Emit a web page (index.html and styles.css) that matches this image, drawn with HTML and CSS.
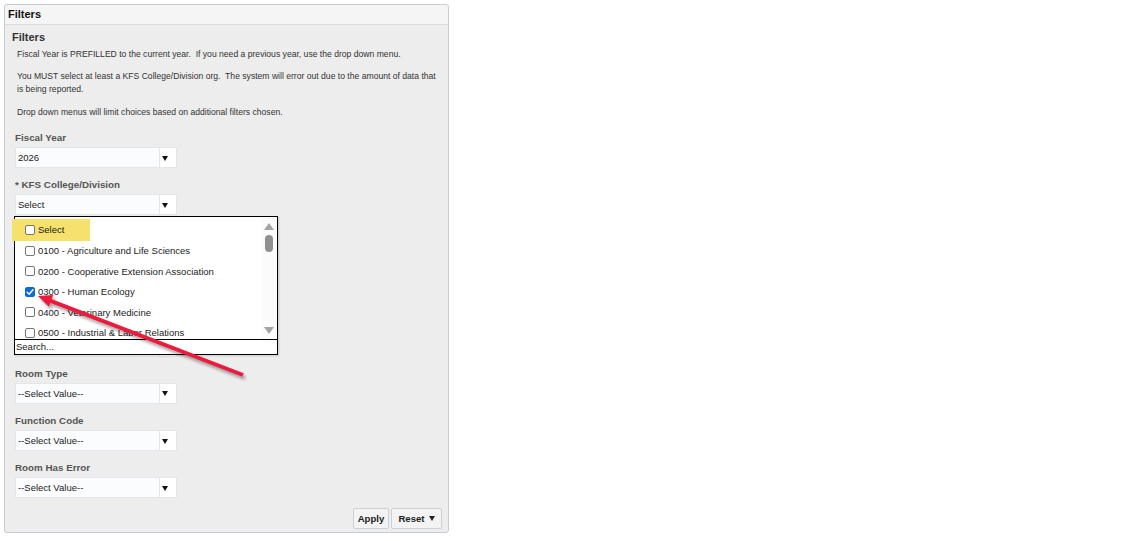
FILE: index.html
```html
<!DOCTYPE html>
<html>
<head>
<meta charset="utf-8">
<title>Filters</title>
<link rel="stylesheet" href="styles.css">
</head>
<body>
<div class="panel">
  <div class="panel-head">Filters</div>
  <div class="panel-body">
    <h2 class="title">Filters</h2>
    <div class="notes">
      <p>Fiscal Year is PREFILLED to the current year.&nbsp; If you need a previous year, use the drop down menu.</p>
      <p>You MUST select at least a KFS College/Division org.&nbsp; The system will error out due to the amount of data that is being reported.</p>
      <p class="last">Drop down menus will limit choices based on additional filters chosen.</p>
    </div>

    <div class="fields">
      <div class="field">
        <div class="label">Fiscal Year</div>
        <div class="select"><span class="val">2026</span><span class="caret"><i></i></span></div>
      </div>

      <div class="field with-popup">
        <div class="label">* KFS College/Division</div>
        <div class="select"><span class="val">Select</span><span class="caret"><i></i></span></div>

        <div class="popup">
          <div class="highlight"></div>
          <div class="list">
            <div class="items">
              <div class="item"><span class="cb"></span>Select</div>
              <div class="item"><span class="cb"></span>0100 - Agriculture and Life Sciences</div>
              <div class="item"><span class="cb"></span>0200 - Cooperative Extension Association</div>
              <div class="item"><span class="cb checked"><svg viewBox="0 0 10 10" width="10" height="10"><polyline points="2.2,5.2 4.2,7.2 7.9,2.8" fill="none" stroke="#fff" stroke-width="1.5" stroke-linecap="round" stroke-linejoin="round"/></svg></span>0300 - Human Ecology</div>
              <div class="item"><span class="cb"></span>0400 - Veterinary Medicine</div>
              <div class="item"><span class="cb"></span>0500 - Industrial &amp; Labor Relations</div>
            </div>
            <div class="scrollbar">
              <svg class="sb-up" viewBox="0 0 10 7" width="10" height="7"><polygon points="5,0 10,7 0,7" fill="#a4a4a4"/></svg>
              <div class="thumb"></div>
              <div class="sb-space"></div>
              <svg class="sb-down" viewBox="0 0 10 7" width="10" height="7"><polygon points="0,0 10,0 5,7" fill="#a4a4a4"/></svg>
            </div>
          </div>
          <div class="search">Search...</div>
        </div>
      </div>

      <div class="field covered">
        <div class="label"></div>
        <div class="select"><span class="val"></span><span class="caret"><i></i></span></div>
      </div>
      <div class="field covered">
        <div class="label"></div>
        <div class="select"><span class="val"></span><span class="caret"><i></i></span></div>
      </div>
      <div class="field covered">
        <div class="label"></div>
        <div class="select"><span class="val"></span><span class="caret"><i></i></span></div>
      </div>

      <div class="field">
        <div class="label">Room Type</div>
        <div class="select"><span class="val">--Select Value--</span><span class="caret"><i></i></span></div>
      </div>
      <div class="field">
        <div class="label">Function Code</div>
        <div class="select"><span class="val">--Select Value--</span><span class="caret"><i></i></span></div>
      </div>
      <div class="field">
        <div class="label">Room Has Error</div>
        <div class="select"><span class="val">--Select Value--</span><span class="caret"><i></i></span></div>
      </div>
    </div>

    <div class="actions">
      <button class="btn apply">Apply</button>
      <button class="btn reset">Reset <i class="tri"></i></button>
    </div>
  </div>
</div>

<svg class="annotation" width="300" height="400" viewBox="0 0 300 400">
  <defs>
    <filter id="sh" x="-20%" y="-20%" width="140%" height="140%">
      <feDropShadow dx="2" dy="3" stdDeviation="1.6" flood-color="#000" flood-opacity="0.35"/>
    </filter>
  </defs>
  <g filter="url(#sh)">
    <line x1="50" y1="300.6" x2="243" y2="375" stroke="#ea1b3d" stroke-width="4"/>
    <polygon points="38,296 53.3,295 48.9,306.8" fill="#ea1b3d"/>
  </g>
</svg>
</body>
</html>
```

FILE: styles.css
```css
* { box-sizing: border-box; }

body {
  margin: 0;
  background: #ffffff;
  font-family: "Liberation Sans", Arial, sans-serif;
  color: #222;
  position: relative;
}

.panel {
  margin: 4px 0 0 4px;
  width: 445px;
  border: 1px solid #c7cbd5;
  border-radius: 3px;
  background: #ededed;
}

.panel-head {
  height: 20px;
  background: #f5f5f5;
  border-bottom: 1px solid #dadada;
  border-radius: 3px 3px 0 0;
  padding-left: 3px;
  font-size: 11px;
  font-weight: bold;
  line-height: 19px;
  color: #111;
}

.panel-body {
  padding: 5px 6px 3px 7px;
}

.title {
  margin: 0;
  font-size: 11px;
  line-height: 14px;
  font-weight: bold;
  color: #333;
}

.notes {
  margin-top: 4px;
  padding-left: 5px;
}

.notes p {
  margin: 0 0 9px 0;
  font-size: 8.6px;
  line-height: 13px;
  color: #333;
  width: 426px;
}

.notes p:nth-child(2) { margin-bottom: 10px; }
.notes p.last { margin-bottom: 0; }

.fields {
  margin-top: 13px;
  padding-left: 3px;
}

.field {
  margin-bottom: 11.2px;
}

.field:last-child { margin-bottom: 0; }

.with-popup { position: relative; }

.label {
  height: 12px;
  font-size: 9.8px;
  line-height: 12px;
  font-weight: bold;
  color: #555;
  margin-bottom: 3px;
}

.select {
  display: flex;
  width: 162px;
  height: 21px;
  border: 1px solid #e3e6ea;
  background: #fff;
}

.select .val {
  flex: 1;
  background: #fafcfe;
  border-right: 1px solid #e3e6ea;
  font-size: 9.5px;
  line-height: 19px;
  padding-left: 2px;
  color: #222;
}

.select .caret {
  width: 16px;
  display: flex;
  align-items: center;
  padding-left: 2px;
  padding-top: 1px;
}

.select .caret i {
  width: 0;
  height: 0;
  border-left: 3.5px solid transparent;
  border-right: 3.5px solid transparent;
  border-top: 5px solid #111;
}

.popup {
  position: absolute;
  top: 37px;
  left: -1px;
  width: 264px;
  height: 139px;
  border: 1px solid #000;
  background: #fff;
  z-index: 5;
  box-shadow: 1px 1px 2px rgba(0,0,0,0.15);
}

.highlight {
  position: absolute;
  left: -3px;
  top: 2px;
  width: 78px;
  height: 22px;
  background: #f6e16c;
  z-index: 1;
}

.list {
  position: relative;
  z-index: 2;
  height: 122px;
  display: flex;
  overflow: hidden;
}

.items {
  flex: 1;
  padding-top: 2.5px;
}

.item {
  height: 20.6px;
  display: flex;
  align-items: center;
  padding-left: 10px;
  font-size: 9.5px;
  color: #222;
  white-space: nowrap;
}

.cb {
  width: 10px;
  height: 10px;
  border: 1px solid #767676;
  border-radius: 2px;
  background: #fff;
  margin-right: 3px;
  flex: none;
  display: flex;
}

.cb.checked {
  background: #0b6cd9;
  border-color: #0b6cd9;
}

.cb.checked svg { margin: -1px; }

.scrollbar {
  width: 14px;
  background: #fbfbfb;
  display: flex;
  flex-direction: column;
  align-items: center;
  padding-top: 6px;
  padding-bottom: 5px;
  margin-right: 1px;
}

.sb-up, .sb-down { flex: none; }

.thumb {
  margin-top: 5px;
  width: 8px;
  height: 17px;
  border-radius: 4px;
  background: #8f8f8f;
}

.sb-space { flex: 1; }

.search {
  border-top: 1px solid #000;
  height: 15px;
  font-size: 9.5px;
  line-height: 14px;
  padding-left: 1px;
  color: #222;
  position: relative;
  z-index: 2;
}

.actions {
  margin-top: 10px;
  display: flex;
  justify-content: flex-end;
  gap: 2px;
}

.btn {
  height: 21px;
  border: 1px solid #cdd0d4;
  border-radius: 2px;
  background: #f3f3f3;
  font-family: "Liberation Sans", Arial, sans-serif;
  font-size: 9.6px;
  font-weight: bold;
  color: #222;
  padding: 0;
  display: flex;
  align-items: center;
  justify-content: center;
}

.btn.apply { width: 36px; }
.btn.reset { width: 51px; gap: 4px; }

.btn .tri {
  width: 0;
  height: 0;
  border-left: 3.5px solid transparent;
  border-right: 3.5px solid transparent;
  border-top: 5px solid #222;
}

.annotation {
  position: absolute;
  left: 0;
  top: 0;
  z-index: 10;
  pointer-events: none;
}
```
